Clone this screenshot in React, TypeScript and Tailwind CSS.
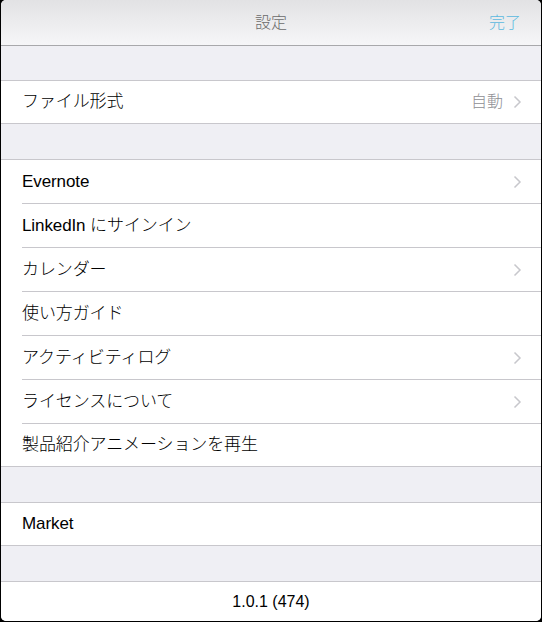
import React from "react";

const font = { fontFamily: '"Liberation Sans", "Noto Sans CJK JP", sans-serif' };

function Chevron() {
  return (
    <svg width="9" height="14" viewBox="0 0 9 14" fill="none" className="shrink-0">
      <path d="M1.5 1.5L7 7l-5.5 5.5" stroke="#c7c7cc" strokeWidth="1.5" />
    </svg>
  );
}

type Row = { label: string; value?: string; chevron?: boolean };

function Group({ rows }: { rows: Row[] }) {
  return (
    <div className="bg-white border-y border-[#c8c7cc]">
      {rows.map((row, i) => {
        const last = i === rows.length - 1;
        return (
          <div key={row.label} className="pl-[21px]">
            <div
              className={
                last
                  ? "flex items-center h-[42px] pr-[19px]"
                  : "flex items-center h-[44px] pr-[19px] border-b border-[#c8c7cc]"
              }
            >
              <span className="flex-1 text-[17px] font-light text-black tracking-[-0.1px]">{row.label}</span>
              {row.value && (
                <span className="text-[16px] font-light text-[#8e8e93] mr-[10px]">{row.value}</span>
              )}
              {row.chevron && <Chevron />}
            </div>
          </div>
        );
      })}
    </div>
  );
}

function Gap({ h }: { h: string }) {
  return <div className={h} />;
}

export default function App() {
  return (
    <div className="w-[542px] h-[622px] bg-black" style={font}>
      <div className="w-[540px] h-[621px] ml-px rounded-[5px] bg-[#efeff4] overflow-hidden flex flex-col">
        <div className="h-[46px] shrink-0 relative flex items-center justify-center bg-gradient-to-b from-[#e2e2e4] to-[#f6f6f8] border-b border-[#a8a8ab]">
          <span className="text-[16px] font-light text-[#6b6b6b]">設定</span>
          <span className="absolute right-[20px] text-[16px] font-light text-[#5ab9df]">完了</span>
        </div>
        <Gap h="h-[34px]" />
        <Group rows={[{ label: "ファイル形式", value: "自動", chevron: true }]} />
        <Gap h="h-[35px]" />
        <Group
          rows={[
            { label: "Evernote", chevron: true },
            { label: "LinkedIn にサインイン" },
            { label: "カレンダー", chevron: true },
            { label: "使い方ガイド" },
            { label: "アクティビティログ", chevron: true },
            { label: "ライセンスについて", chevron: true },
            { label: "製品紹介アニメーションを再生" },
          ]}
        />
        <Gap h="h-[35px]" />
        <Group rows={[{ label: "Market" }]} />
        <Gap h="h-[35px]" />
        <div className="flex-1 bg-white border-t border-[#c8c7cc] flex items-center justify-center">
          <span className="text-[16px] text-black">1.0.1 (474)</span>
        </div>
      </div>
    </div>
  );
}
